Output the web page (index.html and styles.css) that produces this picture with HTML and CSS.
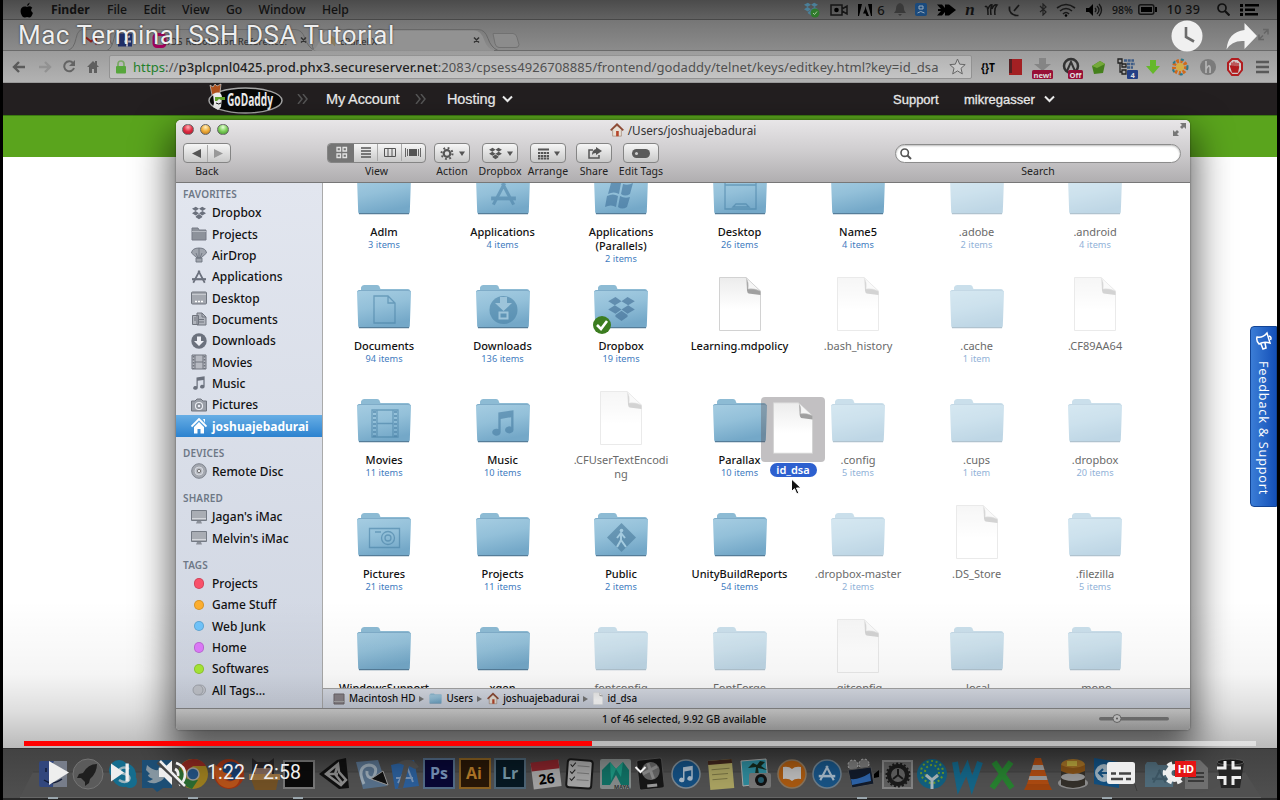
FILE: index.html
```html
<!DOCTYPE html>
<html lang="en">
<head>
<meta charset="utf-8">
<title>Mac Terminal SSH DSA Tutorial</title>
<link rel="stylesheet" href="styles.css">
</head>
<body>
<svg class="defs" width="0" height="0">
  <defs>
    <linearGradient id="fg" x1="0" y1="0" x2=".3" y2="1"><stop offset="0" stop-color="#a6cde2"/><stop offset=".5" stop-color="#93c0d9"/><stop offset="1" stop-color="#74a8c8"/></linearGradient>
    <linearGradient id="pg" x1="0" y1="0" x2="0" y2="1"><stop offset="0" stop-color="#ececec"/><stop offset=".6" stop-color="#fff"/></linearGradient>
  </defs>
  <symbol id="folder" viewBox="0 0 56 45"><path d="M5 6V3.500Q5.500 1 8 1h13q2.500 0 3 3l.5 1H52q2 0 2 2H5z" fill="#8dbbd4"/><path d="M1 8.500Q.8 6 3 6h50q2.200 0 2 2.500L53.800 42Q53.700 44 52 44H4Q2.300 44 2.200 42z" fill="url(#fg)"/><path d="M1.500 7.500Q2 6.500 4 6.500h48q2 0 2.500 1" fill="none" stroke="#7facc8"/><path d="M3 43.700h50" stroke="#557d99" stroke-width="1.200"/></symbol>
  <symbol id="page" viewBox="0 0 44 56"><path d="M1.500 1.500H28L42.500 16V54.500H1.500z" fill="url(#pg)" stroke="#d2d2d2"/><path d="M28.500 3L29 14.500q.3 2 1.500 3L42.500 19V15z" fill="#a0a0a0"/><path d="M28 1.500Q31 6 30 13q6-1 12.500 2z" fill="#f6f6f6" stroke="#c4c4c4" stroke-width=".6"/></symbol>
  <symbol id="dbx" viewBox="0 0 24 22"><path d="M7 1l5 3.500L6.500 8 1 4.500zM17 1l6 3.500L17.500 8 12 4.500zM1 11.500L6.500 8l5.500 3.500L7 15zM12 11.500L17.500 8l5.500 3.500L17 15zM12 12.500l5 3.500v1.500L12 21l-5-3.500V16z"/></symbol>
  <symbol id="house" viewBox="0 0 16 16"><path d="M3 7v8h10V7L8 3z" fill="#e8e0d5" stroke="#8a6a55" stroke-width=".6"/><path d="M.8 8.500L8 1.500l7.200 7" fill="none" stroke="#8d4a34" stroke-width="2"/><path d="M7 9h3v6H7z" fill="#b5462b"/></symbol>
  <symbol id="apps" viewBox="0 0 24 22"><path d="M13 1L3 20M11 1l10 19" fill="none" stroke="currentColor" stroke-width="2.800"/><path d="M1 14.500h22" stroke="currentColor" stroke-width="3.400"/></symbol>
  <symbol id="note" viewBox="0 0 24 24"><path d="M8 3l13-2v17a3.600 3 0 1 1-2-2.800V7L10 8.500V20a3.600 3 0 1 1-2-2.800z" fill="currentColor"/></symbol>
  <symbol id="imac" viewBox="0 0 16 14"><path d="M.5.5h15v10H.5z" fill="#a9adb4" stroke="#747a84"/><path d="M1 8.500h14" stroke="#d4d7dc"/><path d="M6 11h4l1 2.500H5z" fill="#8b9099"/></symbol>
</svg>

<main class="screen">
  <header class="menubar">
    <svg class="apple" viewBox="0 0 14 16"><path d="M9.800.500Q9.500 3.300 7 4 6.900 1.600 9.800.500zM7 5q2.800-1.600 5.300.700-2.800 2.200.6 5.300-1.600 4.700-3.700 4.500-2.200-1-4.200 0C2.500 15.800.6 12 .6 9 .7 5.200 3.600 3.600 7 5z"/></svg>
    <b>Finder</b><span>File</span><span>Edit</span><span>View</span><span>Go</span><span>Window</span><span>Help</span>
    <div class="status">
      <svg width="18" height="16" viewBox="0 0 18 16"><g fill="#4b7f98"><use href="#dbx" width="16" height="14"/></g><circle cx="12" cy="11" r="4.500" fill="#2f7a2b"/><path d="M10 11l1.500 1.500 2.500-3" stroke="#a9c9a0" fill="none"/></svg>
      <svg width="18" height="12" viewBox="0 0 18 12"><path d="M1 1h11v10H1z M12 5l5-3v8l-5-3" fill="none" stroke="#151515" stroke-width="1.500"/><circle cx="6.500" cy="6" r="2.300"/></svg>
      <svg width="14" height="12" viewBox="0 0 14 12"><path d="M0 0h4L1 12H0zM10 0h4v12h-1zM7 2l4 10H8.500L7.500 9.500H5L7 5z"/></svg>
      <span class="six">6</span>
      <svg width="12" height="13" viewBox="0 0 12 13"><path d="M6 0q4 1 4 6 0 2 2 4H0q2-2 2-4 0-5 4-6zM4 11h4l-2 2z" fill="#393939"/></svg>
      <svg width="12" height="14" viewBox="0 0 12 14"><rect width="12" height="13" rx="2" fill="#1a4a7d"/><path d="M4 3h4v3H4zM2.500 10q3-3 7 0" stroke="#9ab" fill="none"/></svg>
      <svg width="19" height="12" viewBox="0 0 19 12"><path d="M0 .5h5l3 3.500V.5h4L19 6l-7 5.500H8V8l-3 3.500H0L4 7H1V5h3z"/></svg>
      <i class="en">n</i>
      <svg width="15" height="12" viewBox="0 0 15 12"><path d="M1 3q3-3 3 8M4 5q2-5 4-4-2 3-1 10M8 5q2-5 5-4-3 3-2 10" fill="none" stroke="#151515" stroke-width="1.500"/></svg>
      <svg width="13" height="14" viewBox="0 0 13 14"><path d="M1.500 4q-1 7 7 8.500M1.500 3.500v4M6.500 12.500h4M6 8l5-6" fill="none" stroke="#181818" stroke-width="1.700"/></svg>
      <svg class="bt" width="8" height="13" viewBox="0 0 8 13"><path d="M1 3l6 6-3 3V1l3 3-6 5" fill="none" stroke="#222" stroke-width="1.200"/></svg>
      <svg width="20" height="14" viewBox="0 0 20 14"><path d="M1 5q9-7 18 0M4 8q6-5 12 0M7 11q3-3 6 0" fill="none" stroke="#181818" stroke-width="1.600"/><circle cx="10" cy="12.500" r="1.300"/></svg>
      <svg width="17" height="14" viewBox="0 0 17 14"><path d="M0 5h3l4-4v12L3 9H0z"/><path d="M9 5q2 2 0 4M11 3q4 4 0 8M13 1q5 6 0 12" fill="none" stroke="#151515" stroke-width="1.300"/></svg>
      <small>98%</small>
      <svg width="19" height="11" viewBox="0 0 19 11"><rect x=".8" y=".8" width="15" height="9.400" rx="2" fill="none" stroke="#151515" stroke-width="1.500"/><path d="M3 3h11v5H3zM17 3h2v5h-2z"/></svg>
      <span class="clock">10 39</span>
      <svg class="spot" width="13" height="13" viewBox="0 0 13 13"><circle cx="5" cy="5" r="4" fill="none" stroke="#111" stroke-width="1.700"/><path d="M8 8l4.500 4.500" stroke="#111" stroke-width="2.200"/></svg>
      <svg width="19" height="12" viewBox="0 0 19 12"><path d="M0 0h3v3H0zM0 4.500h3v3H0zM0 9h3v3H0zM5 0h14v2.500H5zM5 4.500h10V7H5zM5 9h13v2.500H5z"/></svg>
    </div>
  </header>

  <section class="tabs">
    <svg width="1274" height="31" viewBox="3 20.500 1274 31">
      <path d="M68 51q6-2 8-12t8-9h18q5 0 7 9l3 6M107 51q5-2 7-12t8-9h20M150 30h145q7 0 10 9t10 12M315 51q-4-3-2-9M318 30h160q7 0 10 9t10 12" fill="none" stroke="#686868"/>
      <path d="M312 51q5-2 8-11t8-9h146q7 0 10 9t10 11z" fill="#929292"/>
      <path d="M3 51h309M494 51h783" stroke="#6a6a6a"/>
      <path d="M493 34h20q3 0 4 4l2 7q0 3-3 3h-17q-3 0-4-4z" fill="#8c8c8c" stroke="#717171"/>
      <path d="M86 38l5 4 5-4v7" fill="none" stroke="#8c1d1a" stroke-width="2"/>
      <rect x="118" y="34" width="14" height="13" fill="#1f2f68"/><path d="M127 47v-8q0-2 3-2M124 42h7" stroke="#aab" stroke-width="2" fill="none"/>
      <rect x="154" y="35" width="11" height="12" rx="3" fill="none" stroke="#a3005c" stroke-width="3"/>
      <path d="M330 35l6 4-1 8-3-3-3 1z" fill="#8d7f60"/>
      <path d="M301 38l5 5m0-5l-5 5M474 38l5 5m0-5l-5 5" stroke="#333" stroke-width="1.500"/>
      <text x="167" y="45" class="tabt" textLength="120">iOS Resolution Reference:</text>
      <text x="340" y="45" class="tabt" textLength="37">cPanel X</text>
      <path d="M1263 30h5v5m0-5l-4 4M1263 36l-4 4m0-5v5h5" stroke="#666" fill="none" stroke-width="1.500"/>
    </svg>
  </section>

  <section class="toolbar">
    <svg width="14" height="12" viewBox="0 0 14 12"><path d="M13 6H2M7 1L2 6l5 5" fill="none" stroke="#5b5b5b" stroke-width="2.400"/></svg>
    <svg width="14" height="12" viewBox="0 0 14 12"><path d="M1 6h11M7 1l5 5-5 5" fill="none" stroke="#929292" stroke-width="2.400"/></svg>
    <svg class="reload" width="13" height="13" viewBox="0 0 13 13"><path d="M11 8a5 5 0 1 1-1-5" fill="none" stroke="#646464" stroke-width="2"/><path d="M12 0v6H6z" fill="#646464"/></svg>
    <svg class="home" width="12" height="13" viewBox="0 0 12 13"><path d="M6 1L0 7h2v6h3V9h2v4h3V7h2l-2-2V1H8v2z" fill="#5f5f5f"/></svg>
    <div class="omni">
      <svg width="12" height="14" viewBox="0 0 12 14"><path d="M3 7V4q0-3 3-3t3 3v3" fill="none" stroke="#7aa865" stroke-width="1.700"/><rect x="1" y="6" width="10" height="7.500" rx="1" fill="#57a63c"/></svg>
      <span class="url"><em>https</em>://<strong>p3plcpnl0425.prod.phx3.secureserver.net</strong>:2083/cpsess4926708885/frontend/godaddy/telnet/keys/editkey.html?key=id_dsa</span>
      <svg class="star" width="17" height="17" viewBox="0 0 17 17"><path d="M8.500 1l2.200 5.200 5.500.4-4.200 3.700 1.300 5.600-4.800-3-4.800 3L5 10.300.8 6.600l5.500-.4z" fill="#c8c8c8" stroke="#666"/></svg>
    </div>
    <svg class="exts" width="290" height="28" viewBox="0 0 290 28">
      <text x="0" y="19" font-size="13" font-weight="bold" textLength="14" lengthAdjust="spacingAndGlyphs">{}T</text>
      <path d="M28 6h13v16H28z" fill="#a32023"/><path d="M28 6h3v14h-3z" fill="#552023"/>
      <path d="M58 5h7v6h5l-8.500 7-8.500-7h5z" fill="#858585"/><rect x="51" y="17" width="21" height="9" rx="1.500" fill="#970f37"/><text x="52.500" y="24.500" class="bdg" textLength="18" lengthAdjust="spacingAndGlyphs">new!</text>
      <circle cx="90" cy="13" r="7" fill="none" stroke="#333" stroke-width="2.500"/><path d="M86 18l4-9 4 9" stroke="#333" stroke-width="2" fill="none"/><rect x="87" y="17" width="15" height="9" rx="1.500" fill="#970f37"/><text x="88.500" y="24.500" class="bdg" textLength="12" lengthAdjust="spacingAndGlyphs">Off</text>
      <path d="M111 13l8-5 5 3-2 9-9 1z" fill="#45801c"/><path d="M111 13l8-5 5 3-8 4z" fill="#74a93a"/>
      <path d="M137 6h4v4h-4zM141 11h4v3h-4zM141 17h4v4h-4zM139 10v9h2" fill="none" stroke="#222" stroke-width="1.300"/><path d="M143 7.500h10M146 11h8M146 14.500h6" stroke="#3e5c86" stroke-width="2.300" stroke-dasharray="3 .7"/><rect x="146" y="17" width="11" height="9" rx="1" fill="#233f86"/><text x="149.500" y="24.500" class="bdg">4</text>
      <path d="M169 7h6v6h4l-7 8-7-8h4z" fill="#65b82a"/>
      <circle cx="199" cy="14" r="6" fill="none" stroke="#d06a1b" stroke-width="4" stroke-dasharray="2.500 1.500"/><circle cx="199" cy="14" r="7.500" fill="none" stroke="#2a7a8d" stroke-width="2" stroke-dasharray="3 6"/><circle cx="199" cy="14" r="4" fill="#d3ad45"/>
      <circle cx="227" cy="14" r="8" fill="#7b7b7b"/><path d="M225 8v12M225 16q5-8 4 4" stroke="#b8b8b8" stroke-width="1.600" fill="none"/>
      <path d="M251 6h6l4 4v7l-4 5h-6l-4-5v-7z" fill="#d0c8c8" stroke="#b11c1f" stroke-width="2"/><path d="M251 14V9.500m2 4V8.500m2 5V9.500m2 4v-3.500m-7.500 3l2 6h5l1-5z" stroke="#b11c1f" fill="#b11c1f" stroke-width="1.300"/>
      <path d="M275 9h13M275 14h13M275 19h13" stroke="#595959" stroke-width="2.600"/>
    </svg>
  </section>

  <nav class="gd">
    <svg class="logo" width="76" height="32" viewBox="0 0 76 32">
      <ellipse cx="38.500" cy="17.500" rx="36.500" ry="12.500" fill="#080808" stroke="#a6a6a6" stroke-width="1.500"/>
      <path d="M3 2l3 2 2-3 2 2 4-2-1 9-8 2z" fill="#b0521d" stroke="#ccc" stroke-width=".7"/>
      <path d="M6 11q8-4 9 3l-1 10-3 3-5-3 1-4z" fill="#eee"/><path d="M8 14h10v3h-4l-2-1-2 2H8z" fill="#63a52b"/><path d="M9 20q3 2 5 0" stroke="#111" fill="none"/>
      <text x="20" y="23" class="gdt" textLength="46" lengthAdjust="spacingAndGlyphs">GoDaddy</text>
    </svg>
    <svg class="chev" width="12" height="10" viewBox="0 0 12 10"><path d="M1 0l4 5-4 5M6 0l4 5-4 5"/></svg>
    <span class="acct">My Account</span>
    <svg class="chev" width="12" height="10" viewBox="0 0 12 10"><path d="M1 0l4 5-4 5M6 0l4 5-4 5"/></svg>
    <span class="host">Hosting</span>
    <svg class="dn" width="11" height="8" viewBox="0 0 11 8"><path d="M1 1.500l4.500 4.500L10 1.500"/></svg>
    <span class="supp">Support</span><span class="user">mikregasser</span>
    <svg class="dn" width="11" height="8" viewBox="0 0 11 8"><path d="M1 1.500l4.500 4.500L10 1.500"/></svg>
  </nav>
  <div class="green"></div>
  <div class="blank"></div>

  <footer class="dock">
    <svg width="1274" height="52" viewBox="3 748 1274 52">
      <path d="M3 748.500h1274" stroke="#303030"/>
      <path d="M33 772h1212l16 25H20z" fill="#505050"/><path d="M33 772h1212" stroke="#404040"/><path d="M20 797.500h1241" stroke="#666"/><path d="M3 799h1274" stroke="#292929" stroke-width="2"/>
      <path d="M48 798h10M188 798h10M293 798h10M857 798h10M1102 798h10" stroke="#9aa6ad" stroke-width="2"/>
      <rect x="39" y="761" width="28" height="26" rx="2" fill="#32477d"/><path d="M54 761h13v26H53l1-11h-3q0-8 3-15z" fill="#777d8a"/><path d="M44 780q8 6 18-1M46 768v4" stroke="#111b35" fill="none" stroke-width="1.500"/>
      <circle cx="88" cy="774" r="15" fill="#5b5b5b" stroke="#747474"/><path d="M97 764q-9 0-14 9l-4 1-2 4h4l4 4v4l4-3 1-4q7-6 7-15z" fill="#1f1f1f"/>
      <circle cx="119" cy="770" r="10" fill="#156d8e"/><circle cx="124" cy="775" r="12" fill="#156d8e"/><circle cx="130" cy="781" r="7" fill="#156d8e"/><path d="M129 769q-5-3-9 0-1 4 5 5 6 2 4 6-4 4-10 0" fill="none" stroke="#9cb5be" stroke-width="2.500"/>
      <path d="M142 760h30v28h-9l-6 4-4-4h-11z" fill="#1d4f76"/><path d="M147 765q6 6 11 5 1-6 7-4l4 1-3 3q0 11-10 13-6 1-9-2 4 0 6-2-5-2-5-4l2-1-4-4z" fill="#8797a2"/>
      <circle cx="193" cy="774" r="15" fill="#9b7d1f"/><path d="M180 767a15 15 0 0 1 26-1h-13l-6 5z" fill="#8c2820"/><path d="M180 767q-6 16 12 22l6-9-11-1z" fill="#2b6b31"/><circle cx="193" cy="774" r="6" fill="#235181" stroke="#999" stroke-width="1.500"/>
      <circle cx="229" cy="774" r="15" fill="#9d3313"/><circle cx="231" cy="771" r="9.500" fill="#193d6c"/><path d="M215 765q3 3 8 2-2 5 3 6 4 0 6 2-2 5-7 5 10 5 15-8 1 16-12 16-15-2-13-23z" fill="#b55219"/>
      <path d="M252 758l5 4h12l5-4v16h-22z" fill="#272426"/><path d="M255 768h17v8h-17z" fill="#80665a"/><path d="M250 776h29l-3 14h-21z" fill="#725125"/><path d="M249 774h31v6h-31z" fill="#9b7442"/>
      <rect x="284" y="761" width="30" height="27" fill="#0b0b0b" stroke="#777" stroke-width="2"/>
      <path d="M319 774l18-14 9-2 3 30-10 1z" fill="#101010"/><path d="M326 774l12-10 1 8 7 8-5 5zM338 764l-3 10 7 9M326 774h12" fill="none" stroke="#8b8b8b" stroke-width="2.500"/>
      <path d="M356 762l22-2 9 26-24 3z" fill="#57708a"/><path d="M364 784q-8-17 5-19 11 1 4 13-7 0-6-7" fill="none" stroke="#9aa9b5" stroke-width="3"/><path d="M371 779l12-8 5 14z" fill="#111" stroke="#999"/>
      <path d="M391 765l23-5 5 26-24 3z" fill="#2b5e99"/><path d="M398 783l9-16 6 15M396 778h17" stroke="#7793b5" stroke-width="2" fill="none"/><path d="M398 763q13-8 21 4l-4 2-6-3-6 22h-5l6-23z" fill="#515151"/>
      <g class="adobe"><rect x="424" y="759" width="30" height="29" fill="#080735" stroke="#526b87"/><text x="430" y="779" fill="#7792b8">Ps</text><rect x="460" y="759" width="30" height="29" fill="#281707" stroke="#8a6122"/><text x="466" y="779" fill="#b47a28">Ai</text><rect x="495" y="759" width="30" height="29" fill="#071923" stroke="#4d6474"/><text x="502" y="779" fill="#7696a5">Lr</text></g>
      <g transform="rotate(-7 545 774)"><rect x="532" y="762" width="28" height="26" fill="#a2a2a2"/><rect x="532" y="761" width="28" height="9" fill="#84232a"/><text x="538" y="784" font-size="14" font-weight="bold">26</text></g>
      <g transform="rotate(4 580 774)"><rect x="567" y="760" width="25" height="28" rx="3" fill="#a4a4a4" stroke="#181818" stroke-width="2"/><path d="M570 765l2 2 3-4M570 772l2 2 3-4M570 779l2 2 3-4" fill="none" stroke="#222"/><path d="M577 766h12M577 773h12M577 780h12" stroke="#777"/></g>
      <rect x="600" y="759" width="31" height="30" rx="2" fill="#858b8a"/><path d="M602 785v-15l8-8 6 7 7-7 6 8v15h-8l-5-10-6 10z" fill="#117064"/><path d="M610 762l6 7 7-7-2 15-5-8-5 12z" fill="#1d9580"/><text x="614" y="788.500" font-size="5.500" font-weight="bold" fill="#333">MAYA</text>
      <g transform="rotate(-6 651 774)"><rect x="638" y="759" width="25" height="30" rx="2" fill="#171717" stroke="#555"/><circle cx="651" cy="771" r="9" fill="#666"/><path d="M643 773l15-6M649 763l4 16" stroke="#8c8c8c" stroke-width="3"/><path d="M646 784h10v3h-10z" fill="#999"/></g>
      <circle cx="686" cy="774" r="14" fill="#144f81" stroke="#7b8790" stroke-width="1.500"/><g color="#a8b9c8"><use href="#note" x="677" y="764" width="18" height="20"/></g>
      <g transform="rotate(-5 721 774)"><path d="M709 760h24v29h-24z" fill="#a9a261"/><path d="M709 760h24v4h-24z" fill="#3f251c"/><path d="M712 769h18M712 774h16M712 779h15" stroke="#777243"/></g>
      <path d="M741 761l25-2 2 24-25 3z" fill="#2e899a" stroke="#aaa"/><path d="M754 782l2-15-8 1 5-5 4 2 3-4 5 1-4 4 6 4-9-2 2 14z" fill="#14291c"/><rect x="749" y="773" width="22" height="15" rx="2" fill="#777"/><circle cx="761" cy="780" r="6" fill="#111"/><circle cx="761" cy="780" r="3" fill="#255b6c"/>
      <circle cx="792" cy="774" r="14" fill="#a85911" stroke="#88745c" stroke-width="1.500"/><path d="M783 767q6-1 9 2 3-3 9-2v12q-6-1-9 2-3-3-9-2z" fill="#bbb"/>
      <circle cx="827" cy="774" r="14" fill="#185384" stroke="#6c7d8a" stroke-width="1.500"/><g color="#a5b8c7"><use href="#apps" x="818" y="765" width="18" height="17"/></g>
      <circle cx="853" cy="765" r="5" fill="#777" stroke="#bbb" stroke-dasharray="2 2"/><circle cx="864" cy="764" r="5" fill="#777" stroke="#bbb" stroke-dasharray="2 2"/><path d="M848 770l23-3 3 17-22 4z" fill="#121b2b" stroke="#555"/><path d="M851 779q8 1 19-6l1 8-19 4z" fill="#2d63a8"/><path d="M874 774l5-4v7l-5 1z"/>
      <rect x="883" y="761" width="29" height="27" fill="#606060" stroke="#858585" stroke-width="2"/><circle cx="898" cy="775" r="9" fill="none" stroke="#1a1a1a" stroke-width="4"/><circle cx="898" cy="775" r="11.500" fill="none" stroke="#1a1a1a" stroke-width="2" stroke-dasharray="2 2"/><path d="M898 775v-6M898 775l-5 4M898 775l5 4" stroke="#1a1a1a" stroke-width="2"/>
      <circle cx="932" cy="774" r="15" fill="#126081"/><g fill="none" stroke="#6b9c2c" stroke-width="2"><circle cx="932" cy="772" r="11" stroke-dasharray="2 2.600"/><circle cx="932" cy="772" r="7" stroke-dasharray="2 2.400"/></g><path d="M926 775l6 5 6-5M932 780v9" stroke="#a9b6bb" stroke-width="3" fill="none"/>
      <path d="M955 762l4 23 8-17 5 17 8-23" fill="none" stroke="#146587" stroke-width="6"/>
      <path d="M994 762l18 26M1011 762l-19 26" stroke="#278130" stroke-width="6"/>
      <path d="M1035 758h6l8 26h-22z" fill="#ad4b11"/><path d="M1033 765h10l1.500 5h-13zM1029.500 776h17l1 4h-19z" fill="#9b9b9b"/><path d="M1027 784h22l3 6h-28z" fill="#9d430e"/>
      <ellipse cx="1073" cy="783" rx="15" ry="6" fill="#8d8d8d"/><path d="M1061 764h24v21q-12 6-24 0z" fill="#34302a"/><ellipse cx="1073" cy="777" rx="12" ry="4" fill="#999"/><ellipse cx="1073" cy="765" rx="12" ry="6" fill="#a06f26"/><path d="M1061 765v6q12 6 24 0v-6q-12 6-24 0z" fill="#855117"/><path d="M1067 761h10v5h-10z" fill="#b7a43c"/>
      <path d="M1094 758l25 4v26l-25-4z" fill="#125081"/><circle cx="1104" cy="773" r="9" fill="#9eb2bf"/><path d="M1099 773h10M1103 769l-4 4 4 4" stroke="#145080" stroke-width="2" fill="none"/>
      <path d="M1132 776l5 15" stroke="#3c3c3c"/><path d="M1145 765l2-3h9l2 3h17l-2 22h-28z" fill="#506c7b"/><g color="#3f5968"><use href="#apps" x="1151" y="769" width="17" height="15"/></g>
      <path d="M1185 760h15l8 8v21h-23z" fill="#707070"/><path d="M1188 773h16M1188 777h16M1188 781h16" stroke="#3b3b3b" stroke-width="2"/>
      <path d="M1217 762h27l-4 26h-19z" fill="#252525"/><ellipse cx="1230.500" cy="762" rx="13.500" ry="3" fill="#171717" stroke="#555"/>
    </svg>
  </footer>
</main>

<aside class="feedback">
  <svg width="20" height="20" viewBox="0 0 20 20"><path d="M3 6q6 1 10-4l3 10q-6-2-11 1-3-3-2-7zM7 13l2 5 3-1-1-5M15 5q3 1 1.500 4" fill="none" stroke="#fff" stroke-width="1.500"/></svg>
  <span>Feedback &amp; Support</span>
</aside>

<section class="window">
  <header class="titlebar">
    <div class="title">
      <div class="lights"><i class="r"></i><i class="y"></i><i class="g"></i></div>
      <div class="path"><svg width="14" height="14"><use href="#house" width="14" height="14"/></svg>/Users/joshuajebadurai</div>
      <svg class="full" width="13" height="13" viewBox="0 0 13 13"><path d="M7 0h6v6l-2-2-2 2-2-2 2-2zM6 13H0V7l2 2 2-2 2 2-2 2z" fill="#777"/></svg>
    </div>
    <div class="tools">
      <div class="tool back"><div class="btn"><svg width="46" height="17" viewBox="0 0 46 17"><path d="M17 4v9L8 8.500z" fill="#555"/><path d="M30 4v9l9-4.500z" fill="#999"/><path d="M23.500 0v17" stroke="#aaa"/></svg></div><label>Back</label></div>
      <div class="tool view"><div class="btn"><svg width="97" height="19" viewBox="0 1 97 19"><rect x="-1" width="27" height="20" fill="#757575"/><g transform="translate(0 1)"><path d="M9 3.500h3.500V7H9zM15 3.500h3.500V7H15zM9 10h3.500v3.500H9zM15 10h3.500v3.500H15z" fill="none" stroke="#e2e2e2" stroke-width="1.300"/><path d="M33 4h10M33 7h10M33 10h10M33 13h10" stroke="#555" stroke-width="1.300"/><path d="M56.500 4.500h11v8h-11zM60 4v9M64 4v9" stroke="#555" fill="none"/><path d="M81 5h8v7h-8z" fill="#555"/><path d="M77.500 4v9M79.500 5v7M90.500 5v7M92.500 4v9" stroke="#666"/><path d="M49.500 0v17M73.500 0v17" stroke="#aaa"/></g></svg></div><label>View</label></div>
      <div class="tool t1"><div class="btn"><svg width="34" height="17" viewBox="0 0 34 17"><circle cx="12" cy="8.500" r="3.300" fill="none" stroke="#555" stroke-width="2.200"/><circle cx="12" cy="8.500" r="5.500" fill="none" stroke="#555" stroke-width="2" stroke-dasharray="1.800 2.520"/><path d="M24 6.500h6l-3 4.500z" fill="#555"/></svg></div><label>Action</label></div>
      <div class="tool t2"><div class="btn"><svg width="34" height="17" viewBox="0 0 34 17"><g fill="#555"><use href="#dbx" x="5.500" y="2" width="14" height="13"/><path d="M24 6.500h6l-3 4.500z"/></g></svg></div><label>Dropbox</label></div>
      <div class="tool t3"><div class="btn"><svg width="34" height="17" viewBox="0 0 34 17"><path d="M7 4.500h11" stroke="#555" stroke-width="2"/><path d="M7 8h11M7 11h11M7 13.500h11" stroke="#555" stroke-width="1.800" stroke-dasharray="2.300 .6"/><path d="M23 6.500h6L26 11z" fill="#555"/></svg></div><label>Arrange</label></div>
      <div class="tool t4"><div class="btn"><svg width="34" height="17" viewBox="0 0 34 17"><path d="M16 5h-4v8h10v-3" fill="none" stroke="#555" stroke-width="1.500"/><path d="M19 2l6 4-6 4V8q-3 0-4 2 0-5 4-6z" fill="#555"/></svg></div><label>Share</label></div>
      <div class="tool t5"><div class="btn"><svg width="34" height="17" viewBox="0 0 34 17"><rect x="8" y="4" width="18" height="9" rx="4.500" fill="#5b5b5b"/><circle cx="12.500" cy="8.500" r="1.500" fill="#ccc"/></svg></div><label>Edit Tags</label></div>
      <div class="tool search"><div class="field"><svg width="12" height="12" viewBox="0 0 12 12"><circle cx="4.700" cy="4.700" r="3.700" fill="none" stroke="#555" stroke-width="1.600"/><path d="M7.500 7.500L11 11" stroke="#555" stroke-width="2"/></svg></div><label>Search</label></div>
    </div>
  </header>

  <div class="body">
    <nav class="side">
      <h4>FAVORITES</h4>
      <p><svg viewBox="0 0 16 16"><use href="#dbx" y="1" width="16" height="14"/></svg>Dropbox</p>
      <p><svg viewBox="0 0 16 16"><path d="M1 4V2h6l1 2h7v10H1z" fill="#8d929b" stroke="#767b86"/><path d="M1 5.500h14" stroke="#b5b9c1"/></svg>Projects</p>
      <p><svg viewBox="0 0 16 16"><path d="M.5 6Q1 1 8 1t7.500 5L10 11H6zM5 6l2 5M11 6l-2 5M8 1v10M5 11h6v4H5z" fill="#a0a5ae" stroke="#6e7480" stroke-width=".9"/></svg>AirDrop</p>
      <p><svg viewBox="0 0 16 16"><use href="#apps" y="1" width="16" height="14"/></svg>Applications</p>
      <p><svg viewBox="0 0 16 16"><rect x=".5" y="2" width="15" height="12" rx="1" fill="#a4a8b0" stroke="#70757f"/><path d="M1 4.500h14" stroke="#c6c9cf"/><path d="M4 11.500h8" stroke="#fff" stroke-width="1.600" stroke-dasharray="2 1"/></svg>Desktop</p>
      <p><svg viewBox="0 0 16 16"><path d="M1.500 4.500h6v9h-6zM6 2h5l4 4v8H6z" fill="#b0b4bc" stroke="#70757f"/><path d="M11 2v4h4M8 8.500h5M8 11h5M3 7h2M3 9h2" stroke="#70757f" fill="none"/></svg>Documents</p>
      <p><svg viewBox="0 0 16 16"><circle cx="8" cy="8" r="7.700"/><path d="M6 3.500h4V8h3l-5 5-5-5h3z" fill="#eceef4"/></svg>Downloads</p>
      <p><svg viewBox="0 0 16 16"><path d="M1 1h14v14H1z" fill="#b7bac2" stroke="#70757f"/><path d="M4 1v14M12 1v14M4 8h8" stroke="#70757f"/><path d="M2.500 2v13M13.500 2v13" stroke="#70757f" stroke-width="1.600" stroke-dasharray="1.500 1.500"/></svg>Movies</p>
      <p><svg viewBox="0 0 16 16"><use href="#note" x=".5" y=".5" width="15" height="15"/></svg>Music</p>
      <p><svg viewBox="0 0 16 16"><path d="M.5 4H4l2-2h4l2 2h3.500v10H.5z" fill="#9a9fa8" stroke="#70757f"/><circle cx="8" cy="9" r="3.500" fill="#888d96" stroke="#eceef4" stroke-width="1.200"/><circle cx="8" cy="9" r="1.300" fill="#eceef4"/></svg>Pictures</p>
      <p class="sel"><svg viewBox="0 0 16 16"><path d="M.5 8.500L8 1l7.500 7.500" fill="none" stroke="#fff" stroke-width="1.800"/><path d="M3 9l5-5 5 5v6.500H9.500V11h-3v4.500H3zM12 1h2v4z" fill="#fff"/></svg>joshuajebadurai</p>
      <h4>DEVICES</h4>
      <p><svg viewBox="0 0 16 16"><circle cx="8" cy="8" r="7.300" fill="#a4a8b0" stroke="#7f848e"/><circle cx="8" cy="8" r="4" fill="#b9bcc4" stroke="#d7dae0"/><circle cx="8" cy="8" r="1.700" fill="#e6e8ec" stroke="#777"/></svg>Remote Disc</p>
      <h4>SHARED</h4>
      <p><svg viewBox="0 0 16 16"><use href="#imac" y="1" width="16" height="14"/></svg>Jagan's iMac</p>
      <p><svg viewBox="0 0 16 16"><use href="#imac" y="1" width="16" height="14"/></svg>Melvin's iMac</p>
      <h4>TAGS</h4>
      <p><i class="dot red"></i>Projects</p>
      <p><i class="dot orange"></i>Game Stuff</p>
      <p><i class="dot blue"></i>Web Junk</p>
      <p><i class="dot purple"></i>Home</p>
      <p><i class="dot lime"></i>Softwares</p>
      <p><svg viewBox="0 0 16 16"><circle cx="9.500" cy="8" r="5" fill="#c9ccd3" stroke="#a4a8b0"/><circle cx="7" cy="8" r="5" fill="#c3c6cd" stroke="#a4a8b0"/></svg>All Tags...</p>
    </nav>
    <div class="main">
      <div class="grid">
        <div class="c"><div class="i"><svg class="f"><use href="#folder"/></svg></div>Adlm<small>3 items</small></div>
        <div class="c"><div class="i"><svg class="f"><use href="#folder"/><g class="mark" color="#4d83a8"><use href="#apps" x="15" y="12" width="27" height="25"/></g></svg></div>Applications<small>4 items</small></div>
        <div class="c"><div class="i"><svg class="f"><use href="#folder"/><path class="mark" d="M18 13q6-3 10 0l-2 11q-5-3-11 0zM30 14q5 2 10-1l-3 11q-5 3-9 0zM14 26q6-3 11 0l-2 11q-5-3-11 0zM27 26q5 3 10 1l-3 10q-5 3-9 0z" fill="#3e6f99"/></svg></div>Applications<br>(Parallels)<small>2 items</small></div>
        <div class="c"><div class="i"><svg class="f"><use href="#folder"/><path class="mark line" d="M13 11h31v28H13zM13 15h31M21 37l3-3h10l3 3z"/></svg></div>Desktop<small>26 items</small></div>
        <div class="c"><div class="i"><svg class="f"><use href="#folder"/></svg></div>Name5<small>4 items</small></div>
        <div class="c h"><div class="i"><svg class="f"><use href="#folder"/></svg></div>.adobe<small>2 items</small></div>
        <div class="c h"><div class="i"><svg class="f"><use href="#folder"/></svg></div>.android<small>4 items</small></div>

        <div class="c"><div class="i"><svg class="f"><use href="#folder"/><path class="mark line" d="M18 12h14l7 7v20H18zM32 12v7h7"/></svg></div>Documents<small>94 items</small></div>
        <div class="c"><div class="i"><svg class="f"><use href="#folder"/><circle class="mark" cx="28.500" cy="26" r="14" fill="#4780a5"/><path d="M25 13h7v6h5l-8.500 8-8.500-8h5z" fill="#9dc4da"/><path d="M24.500 28.500h8v6h-8z" fill="none" stroke="#9dc4da" stroke-width="2"/></svg></div>Downloads<small>136 items</small></div>
        <div class="c"><div class="i"><svg class="f"><use href="#folder"/><g class="mark" fill="#3e6a92"><use href="#dbx" x="14" y="11" width="29" height="28"/></g></svg><svg class="ok" viewBox="0 0 20 20"><circle cx="10" cy="10" r="9" fill="#3c7d20"/><path d="M5 10l4 4 6-8" fill="none" stroke="#fff" stroke-width="2.600"/></svg></div>Dropbox<small>19 items</small></div>
        <div class="c"><div class="i"><svg class="d"><use href="#page"/></svg></div>Learning.mdpolicy</div>
        <div class="c h"><div class="i"><svg class="d"><use href="#page"/></svg></div>.bash_history</div>
        <div class="c h"><div class="i"><svg class="f"><use href="#folder"/></svg></div>.cache<small>1 item</small></div>
        <div class="c h"><div class="i"><svg class="d"><use href="#page"/></svg></div>.CF89AA64</div>

        <div class="c"><div class="i"><svg class="f"><use href="#folder"/><path class="mark line" d="M16 12h26v27H16zM21 12v27M37 12v27M21 25.500h16"/><path class="mark" d="M18.500 13v26M39.500 13v26" stroke="#4d83a8" stroke-width="3" stroke-dasharray="2 2"/></svg></div>Movies<small>11 items</small></div>
        <div class="c"><div class="i"><svg class="f"><use href="#folder"/><g class="mark" color="#467ca2"><use href="#note" x="14" y="11" width="28" height="28"/></g></svg></div>Music<small>10 items</small></div>
        <div class="c h"><div class="i"><svg class="d"><use href="#page"/></svg></div>.CFUserTextEncodi<br>ng</div>
        <div class="c"><div class="i"><svg class="f"><use href="#folder"/></svg></div>Parallax<small>10 items</small></div>
        <div class="c h"><div class="i"><svg class="f"><use href="#folder"/></svg></div>.config<small>5 items</small></div>
        <div class="c h"><div class="i"><svg class="f"><use href="#folder"/></svg></div>.cups<small>1 item</small></div>
        <div class="c h"><div class="i"><svg class="f"><use href="#folder"/></svg></div>.dropbox<small>20 items</small></div>

        <div class="c"><div class="i"><svg class="f"><use href="#folder"/><path class="mark line" d="M13.500 16.500h30v19h-30zM19 20h6"/><circle class="mark line" cx="32" cy="26" r="6.500"/><circle class="mark line" cx="32" cy="26" r="3"/></svg></div>Pictures<small>21 items</small></div>
        <div class="c"><div class="i"><svg class="f"><use href="#folder"/></svg></div>Projects<small>11 items</small></div>
        <div class="c"><div class="i"><svg class="f"><use href="#folder"/><path class="mark" d="M28.500 11l14.500 14.500L28.500 40 14 25.500z" fill="#47789a"/><circle cx="28.500" cy="18.500" r="1.800" fill="#a4cbdf"/><path d="M28 21v7l-4 7M28 28l5 7M24 26l4-5 4 5" fill="none" stroke="#a4cbdf" stroke-width="2"/></svg></div>Public<small>2 items</small></div>
        <div class="c"><div class="i"><svg class="f"><use href="#folder"/></svg></div>UnityBuildReports<small>54 items</small></div>
        <div class="c h"><div class="i"><svg class="f"><use href="#folder"/></svg></div>.dropbox-master<small>2 items</small></div>
        <div class="c h"><div class="i"><svg class="d"><use href="#page"/></svg></div>.DS_Store</div>
        <div class="c h"><div class="i"><svg class="f"><use href="#folder"/></svg></div>.filezilla<small>5 items</small></div>

        <div class="c"><div class="i"><svg class="f"><use href="#folder"/></svg></div>WindowsSupport</div>
        <div class="c"><div class="i"><svg class="f"><use href="#folder"/></svg></div>xgen</div>
        <div class="c h"><div class="i"><svg class="f"><use href="#folder"/></svg></div>fontconfig</div>
        <div class="c h"><div class="i"><svg class="f"><use href="#folder"/></svg></div>FontForge</div>
        <div class="c h"><div class="i"><svg class="d"><use href="#page"/></svg></div>.gitconfig</div>
        <div class="c h"><div class="i"><svg class="f"><use href="#folder"/></svg></div>.local</div>
        <div class="c h"><div class="i"><svg class="f"><use href="#folder"/></svg></div>.mono</div>
      </div>
      <div class="pathbar">
        <svg width="12" height="12" viewBox="0 0 12 12"><path d="M1 1h10v10H1z" fill="#8b858a" stroke="#6c666b"/><path d="M1 8.500h10" stroke="#aaa"/></svg><span>Macintosh HD</span><i></i>
        <svg width="13" height="11"><use href="#folder" width="13" height="11"/></svg><span>Users</span><i></i>
        <svg width="12" height="13"><use href="#house" width="12" height="13"/></svg><span>joshuajebadurai</span><i></i>
        <svg width="10" height="13"><use href="#page" width="10" height="13"/></svg><span>id_dsa</span>
      </div>
    </div>
  </div>
  <footer class="statusbar"><span>1 of 46 selected, 9.92 GB available</span><svg width="70" height="9" viewBox="0 0 70 9"><rect y="3" width="70" height="3.500" rx="1.700" fill="#7d7d7d"/><circle cx="18" cy="4.500" r="4" fill="#d8d8d8" stroke="#777"/><circle cx="18" cy="4.500" r="1" fill="#666"/></svg></footer>
</section>

<div class="drag">
  <div class="box"><svg width="42" height="56"><use href="#page" width="42" height="56"/></svg></div>
  <span>id_dsa</span>
</div>
<svg class="cursor" width="12" height="17" viewBox="0 0 12 17"><path d="M1.500 1v12.500l3-2.800 2.300 5.300 2-1-2.300-5H11z" fill="#111" stroke="#fff"/></svg>
<div class="shade"></div>

<section class="player">
  <header>
    <h1>Mac Terminal SSH DSA Tutorial</h1>
    <svg class="later" width="32" height="32" viewBox="0 0 32 32"><circle cx="16" cy="16" r="15.500" fill="#f0f0f0"/><path d="M15 7v10l8 4.500" fill="none" stroke="#6c6c6c" stroke-width="2.600"/></svg>
    <svg class="share" width="32" height="27" viewBox="0 0 32 27"><path d="M18.500 0L31 13 18.500 26v-8Q6 17 .5 26.500 2 9 18.500 7z" fill="#f2f2f2"/></svg>
  </header>
  <div class="progress"><i></i></div>
  <div class="controls">
    <svg width="1280" height="44" viewBox="0 752 1280 44" fill="#eee">
      <path d="M49 761l20 11.500L49 785z"/><path d="M111 763.500l13 9-13 9zM125.500 763.500h3.300v18h-3.300z"/>
      <path d="M159 768h5l8-7.500v24.500l-8-8h-5z"/><path d="M176 763q9 3 9 11t-6 11M175 769q4 2 3 7" fill="none" stroke="#eee" stroke-width="2.600"/><path d="M158 762l27 25" stroke="#454545" stroke-width="4"/><path d="M160 761l25 25" stroke="#eee" stroke-width="2.500"/>
      <path d="M635.500 767l5 5 5-5" fill="none" stroke="#f4f4f4" stroke-width="2"/>
      <rect x="1107" y="762" width="28" height="22" rx="2.500"/><path d="M1111 773.500h5M1119 773.500h12M1111 779h12M1126 779h5" stroke="#444" stroke-width="2.300"/>
      <circle cx="1174.500" cy="773" r="6" fill="none" stroke="#eee" stroke-width="6"/><circle cx="1174.500" cy="773" r="10" fill="none" stroke="#eee" stroke-width="3.500" stroke-dasharray="5 5.470" stroke-dashoffset="2.500"/>
      <rect x="1175" y="761" width="21" height="16" fill="#e61414"/><text x="1178" y="773" class="hd" textLength="16" lengthAdjust="spacingAndGlyphs">HD</text>
      <path d="M1217 768h8v-7M1241 768h-8v-7M1217 777.500h8v7.500M1241 777.500h-8v7.500" fill="none" stroke="#eee" stroke-width="3"/>
    </svg>
    <span class="time">1:22 / 2:58</span>
  </div>
</section>
</body>
</html>
```

FILE: styles.css
```css
* { box-sizing: border-box; }
body { margin: 0; width: 1280px; height: 800px; overflow: hidden; background: #000; position: relative; font-family: "Noto Sans", "Open Sans", sans-serif; font-size: 11.5px; color: #111; }
svg { flex: none; display: block; }
.defs { position: absolute; }
.screen { width: 1274px; height: 800px; margin-left: 3px; display: flex; flex-direction: column; overflow: hidden; }

.menubar { height: 20px; flex: none; background: linear-gradient(#4b4b4b, #626262); border-bottom: 1px solid #484848; display: flex; align-items: center; padding-left: 17px; font-size: 12.2px; font-weight: 500; }
.menubar > b { margin-left: 17px; width: 56px; }
.apple { width: 14px; height: 16px; }
.menubar > span { margin-right: 16.4px; white-space: nowrap; }
.status { margin-left: auto; margin-right: 18px; display: flex; align-items: center; justify-content: space-between; width: 456px; }
.status small { font-size: 10.5px; margin-right: -4px; }
.six { margin-left: -4px; font-size: 13px; }
.en { font: italic bold 17px "Liberation Serif", serif; line-height: 16px; }
.bt { margin-left: 8px; }
.clock { font-size: 12.5px; letter-spacing: .3px; }
.spot { margin-left: 8px; }

.tabs { height: 31px; flex: none; background: linear-gradient(#767676, #8c8c8c); }
.tabt { font-size: 9.5px; fill: #2c2c2c; }
.toolbar { height: 32px; flex: none; background: linear-gradient(#9c9c9c, #b2b2b2); border-bottom: 1px solid #999; display: flex; align-items: center; padding-left: 9px; gap: 12px; }
.reload { margin-left: -1px; }
.home { margin-left: -1px; }
.omni { width: 863px; height: 24px; margin-left: -2px; background: linear-gradient(#b4b4b4, #c4c4c4); border: 1px solid #929292; border-radius: 2px; display: flex; align-items: center; padding: 0 2px 0 5px; font-size: 13px; color: #505050; }
.url { margin-left: 6px; width: 809px; white-space: nowrap; letter-spacing: .09px; }
.url em { font-style: normal; color: #23802b; }
.url strong { color: #222; font-weight: 500; }
.star { margin-left: 7px; }
.exts { margin-left: -3px; }
.bdg { font-size: 7.5px; font-weight: bold; fill: #ddd; }

.gd { height: 32px; flex: none; background: #231f20; display: flex; align-items: center; padding-left: 204px; font: 14.5px "Liberation Sans", sans-serif; color: #ececec; }
.gdt { font: bold 17px "Open Sans", sans-serif; fill: #eee; }
.chev { margin: 0 0 0 14px; }
.chev path { stroke: #555; fill: none; stroke-width: 1.5; }
.dn path { stroke: #eee; fill: none; stroke-width: 2; }
.acct { margin-left: 17px; width: 75px; white-space: nowrap; letter-spacing: -.15px; -webkit-text-stroke: .2px; }
.host { margin-left: 20px; width: 55px; letter-spacing: -.1px; -webkit-text-stroke: .2px; }
.supp { margin-left: 380px; width: 71px; font-size: 13px; -webkit-text-stroke: .3px; }
.user { width: 80px; font-size: 13px; -webkit-text-stroke: .3px; }
.green { height: 42px; flex: none; background: #5aa41d; border-top: 1px solid #3b7a10; }
.blank { height: 591px; flex: none; background: #fff; }
.dock { flex: 1; background: linear-gradient(#424242, #505050); }
.adobe text { font: bold 16px "Open Sans", sans-serif; }
.adobe rect { stroke-width: 2; }

.feedback { position: absolute; left: 1250px; top: 326px; width: 27px; height: 181px; background: linear-gradient(90deg, #3b7dd6, #1450b8); border: 1px solid #124495; border-radius: 4px 0 0 4px; display: flex; flex-direction: column; align-items: center; padding-top: 4px; gap: 10px; color: #fff; }
.feedback span { writing-mode: vertical-rl; font: 500 12.8px/16px "Open Sans", sans-serif; white-space: nowrap; letter-spacing: .75px; }

.window { position: absolute; left: 176px; top: 120px; width: 1014px; height: 610px; border-radius: 5px 5px 4px 4px; overflow: hidden; display: flex; flex-direction: column; background: #fff; box-shadow: 0 17px 36px 6px rgba(0,0,0,.6), 0 0 2px rgba(0,0,0,.5); }
.titlebar { height: 63px; flex: none; background: linear-gradient(#e8e6e8, #cfcdcf 50%, #b0aeb0); border-bottom: 1px solid #777; }
.title { height: 19px; display: flex; align-items: center; justify-content: space-between; padding: 0 4px 0 6px; }
.lights { display: flex; gap: 6px; width: 120px; }
.lights i { width: 11.5px; height: 11.5px; border-radius: 50%; border: 1px solid #666; }
.r { background: radial-gradient(circle at 50% 25%, #ffb0b5, #e02c42 50%, #a5142a); }
.y { background: radial-gradient(circle at 50% 25%, #fff0c0, #efac38 50%, #b06f1b); }
.g { background: radial-gradient(circle at 50% 25%, #e7ffd8, #7bce57 50%, #3f8b2f); }
.path { display: flex; align-items: center; gap: 4px; font-size: 11.7px; color: #333; margin-left: -2px; }
.full { margin-left: 107px; }
.tools { display: flex; margin-top: 1px; }
.tool { display: flex; flex-direction: column; align-items: center; }
.tool label { font-size: 10.5px; line-height: 14px; margin-top: 1px; color: #222; white-space: nowrap; letter-spacing: .05px; }
.btn { height: 20px; margin-top: 3px; border: 1px solid #858585; border-radius: 4px; background: linear-gradient(#f6f6f6, #c9c9c9); overflow: hidden; padding-top: .5px; }
.back { margin-left: 7px; width: 48px; }
.view { margin-left: 96px; width: 99px; }
.view .btn { padding-top: 0; }
.t1 { margin-left: 8px; width: 36px; }
.t2 { margin-left: 12px; width: 36px; }
.t3 { margin-left: 12px; width: 36px; }
.t4 { margin-left: 10px; width: 36px; }
.t5 { margin-left: 11px; width: 36px; }
.search { margin-left: 236px; width: 286px; }
.field { width: 286px; height: 19px; margin-top: 4px; border-radius: 10px; background: #fff; border: 1px solid #8c8c8c; box-shadow: inset 0 1px 2px #bbb; padding: 3px 4px; }

.body { height: 525px; flex: none; display: flex; }
.side { width: 147px; flex: none; background: linear-gradient(#e2e6ef, #d0d6e2); border-right: 1px solid #aaa; padding-top: 3px; }
.side h4 { margin: 0; height: 16px; padding-left: 7px; line-height: 16px; font-size: 10px; font-weight: 600; color: #6e7886; letter-spacing: .15px; }
.side p { margin: 0; height: 21.35px; display: flex; align-items: center; padding-left: 15px; gap: 5px; font-size: 12px; font-weight: 500; white-space: nowrap; }
.side p svg { width: 16px; height: 16px; fill: #6b717d; color: #6b717d; }
.side p + h4 { margin-top: 8px; }
.side .sel { background: linear-gradient(#67aee5, #2c82cf); color: #fff; font-weight: 700; }
.dot { width: 10.5px; height: 10.5px; border-radius: 50%; margin: 0 2.7px 0 2.8px; box-shadow: inset 0 0 0 1px rgba(0,0,0,.16); }
.red { background: #f9516a; }
.orange { background: #fcae2f; }
.blue { background: #70c4fb; }
.purple { background: #df7bfb; }
.lime { background: #a9ea36; }

.main { flex: 1; display: flex; flex-direction: column; }
.grid { height: 505px; flex: none; overflow: hidden; display: grid; grid-template-columns: repeat(7, 118.5px); grid-auto-rows: 113.85px; padding-left: 1.8px; }
.c { position: relative; top: -23.6px; text-align: center; font-size: 11px; line-height: 14px; font-weight: 500; white-space: nowrap; }
.c small { display: block; font-size: 9.2px; line-height: 11px; color: #3f7cc0; font-weight: 400; letter-spacing: .05px; }
.c.h { color: #6a6a6a; font-weight: 400; }
.c.h small { color: #91b2d8; }
.c.h svg { opacity: .46; }
.i { height: 66px; position: relative; display: flex; justify-content: center; padding-top: 3px; }
.f { width: 56px; height: 45px; margin-top: 8px; overflow: visible; }
.d { width: 44px; height: 56px; }
.mark { opacity: .6; }
.line { fill: none; stroke: #4780a5; stroke-width: 1.3; }
.ok { position: absolute; left: 30px; top: 42px; width: 20px; height: 20px; }
.pathbar { height: 20px; background: linear-gradient(#d9dde6, #c9cfdb); border-top: 1px solid #a5a5a5; display: flex; align-items: center; padding-left: 10px; gap: 4px; font-size: 9.9px; font-weight: 500; white-space: nowrap; }
.pathbar span { position: relative; top: -.5px; }
.pathbar i { border-left: 5px solid #777; border-top: 3px solid transparent; border-bottom: 3px solid transparent; margin-right: 1px; }
.statusbar { height: 22px; background: linear-gradient(#d4d4d4, #b2b2b2); border-top: 1px solid #8b8b8b; display: flex; align-items: center; justify-content: space-between; padding: 0 21px 2px 426px; font-size: 10.2px; font-weight: 500; }

.drag { position: absolute; left: 761px; top: 397px; width: 64px; display: flex; flex-direction: column; align-items: center; }
.box { width: 64px; height: 65px; border-radius: 4px; background: rgba(95,90,95,.38); display: flex; justify-content: center; padding-top: 3px; }
.drag span { margin-top: 1px; background: #2d60cf; color: #fff; font-size: 11px; line-height: 14px; border-radius: 7px; width: 47px; text-align: center; font-weight: 600; }
.cursor { position: absolute; left: 790px; top: 478px; }
.shade { position: absolute; left: 3px; right: 3px; top: 600px; height: 148px; background: linear-gradient(rgba(0,0,0,0), rgba(0,0,0,.04) 50%, rgba(0,0,0,.13) 75%, rgba(0,0,0,.27)); }

.player { position: absolute; inset: 0; color: #eee; font-family: Roboto, sans-serif; display: flex; flex-direction: column; }
.player header { height: 741px; display: flex; align-items: flex-start; padding-left: 18px; }
h1 { font-size: 26px; line-height: 30px; font-weight: 400; margin: 20px auto 0 0; letter-spacing: .5px; text-shadow: 0 0 2px #222; white-space: nowrap; }
.later { margin-top: 20px; }
.share { margin: 23px 22px 0 23px; }
.progress { height: 5px; margin: 0 24px; background: rgba(255,255,255,.52); }
.progress i { display: block; height: 5px; width: 567.5px; background: #f00; }
.controls { position: relative; margin-top: 6px; height: 44px; }
.time { position: absolute; left: 207px; top: 9px; font-size: 19.5px; line-height: 23px; letter-spacing: .1px; white-space: nowrap; }
.hd { font: bold 11.5px Roboto, sans-serif; fill: #fff; }
```
